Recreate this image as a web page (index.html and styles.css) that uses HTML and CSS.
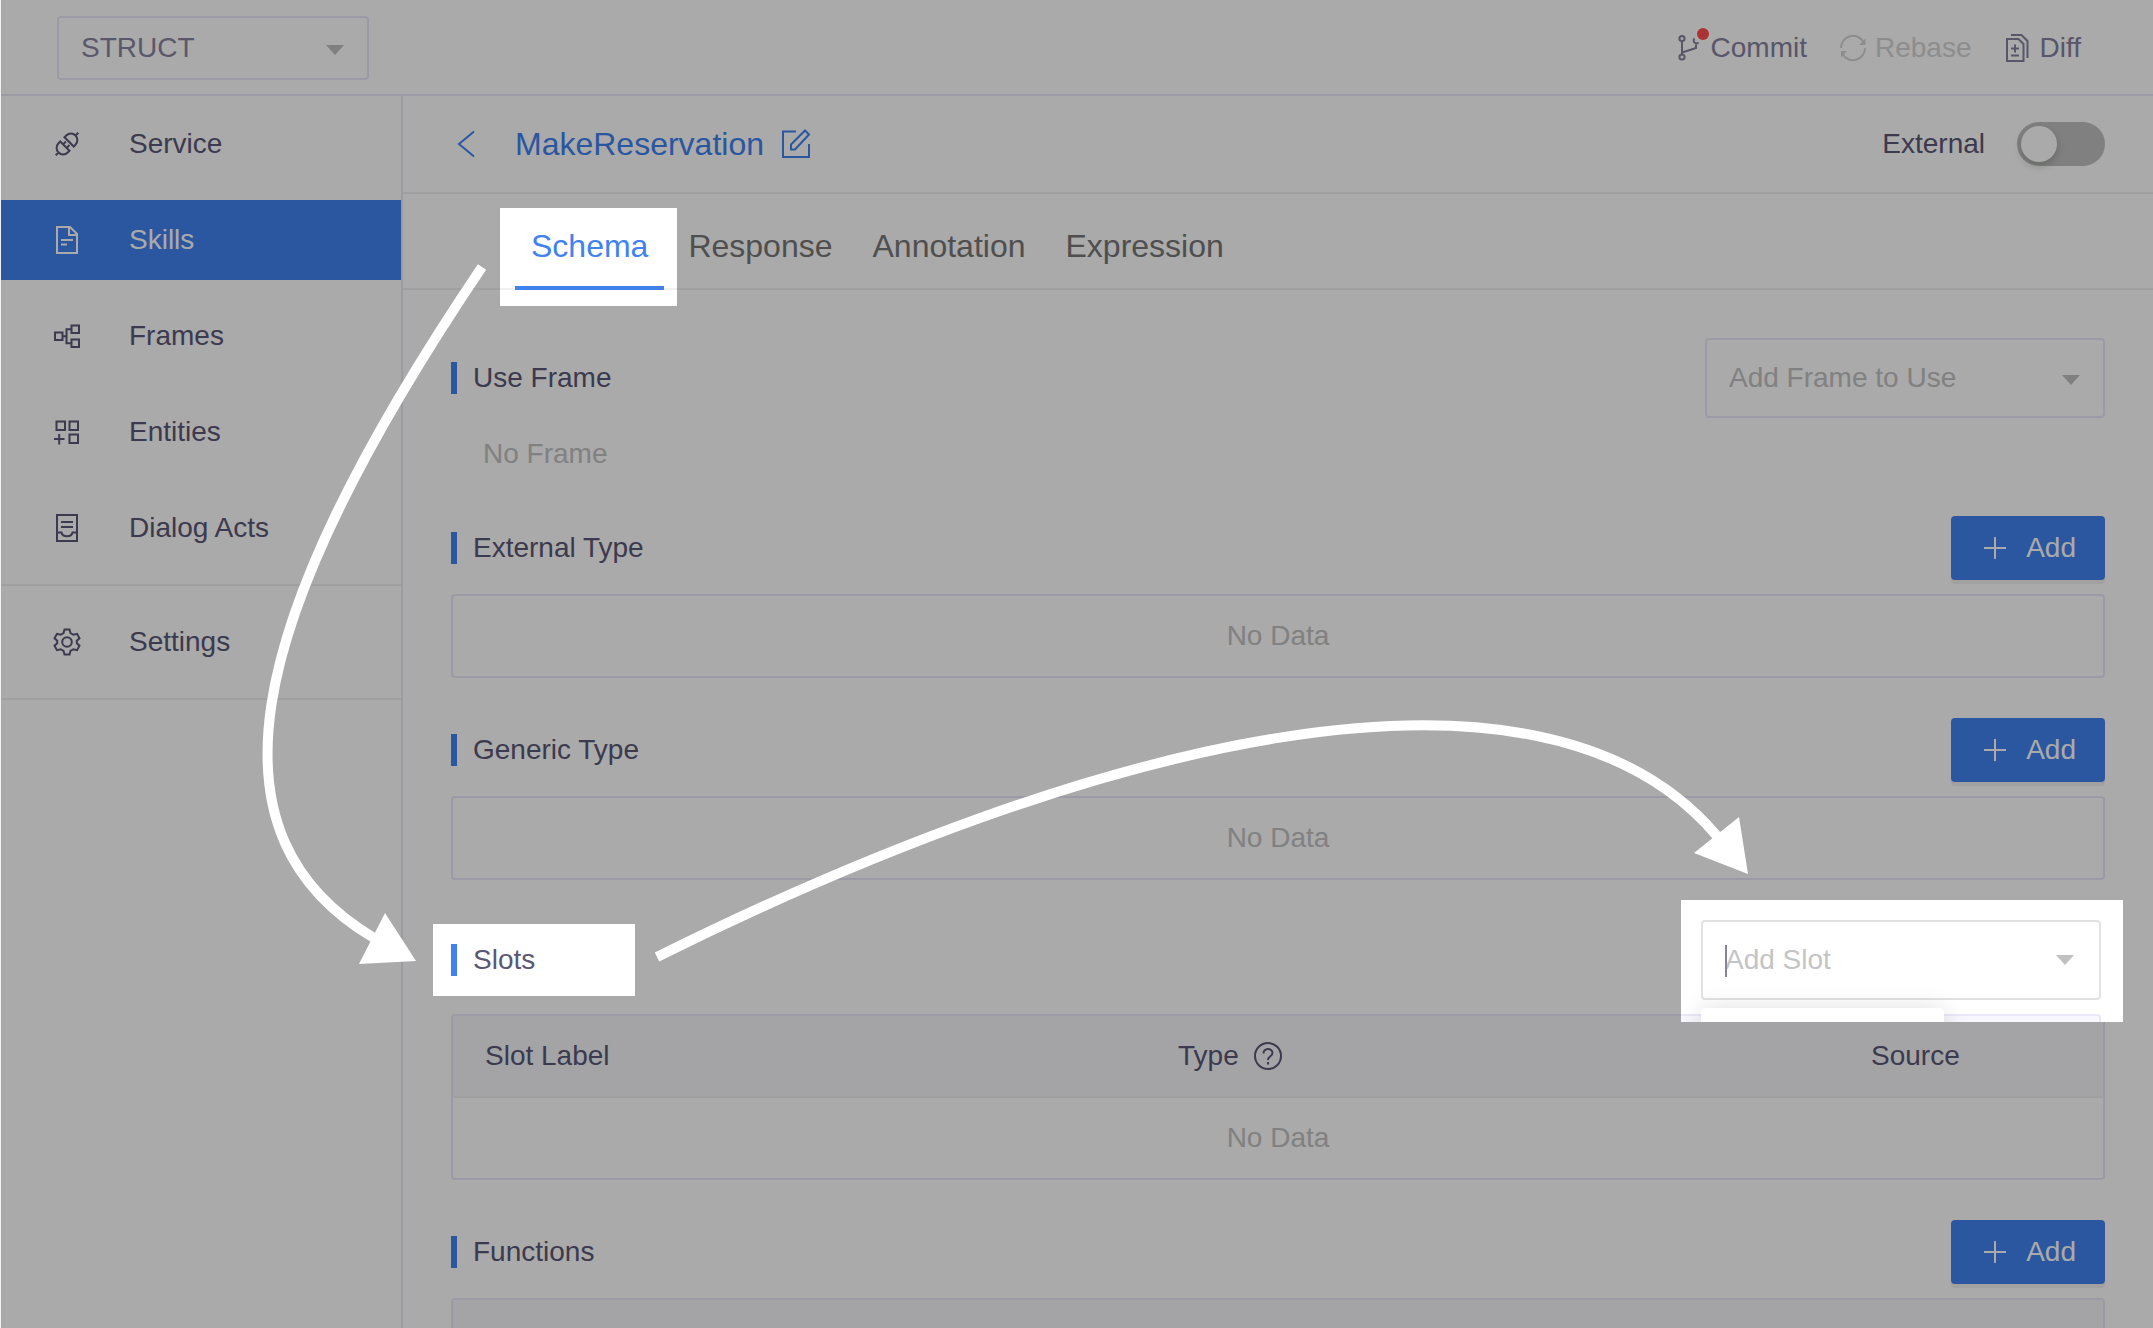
FILE: index.html
```html
<!DOCTYPE html>
<html lang="en">
<head>
<meta charset="utf-8">
<meta name="viewport" content="width=device-width, initial-scale=1">
<title>MakeReservation</title>
<link rel="stylesheet" href="styles.css">
</head>
<body>
<div class="app">
  <header class="topbar">
    <div class="select select-project">
      <select aria-label="Project"><option>STRUCT</option></select>
    </div>
    <div class="actions">
      <button class="action" type="button">
        <svg class="action-icon" viewBox="0 0 26 26"><circle cx="5" cy="3.500" r="2.600"/><circle cx="5" cy="22" r="2.600"/><path d="M5 6v13.500M5 17.500l14-4.500v-3.500"/><path d="M21.500 7.500a2.800 2.800 0 1 1-4-4"/></svg>
        Commit
        <span class="dot"></span>
      </button>
      <button class="action" type="button" disabled>
        <svg class="action-icon" viewBox="0 0 26 26"><path d="M0 13a12 12 0 0 1 22.500-6M24 13a12 12 0 0 1-22.500 6"/><path class="solid" d="M24.500 3.500v6.500h-6.500zM0 22.500v-6.500h6z"/></svg>
        Rebase
      </button>
      <button class="action" type="button">
        <svg class="action-icon" viewBox="0 0 26 26"><path d="M1 4h11.500l5 5v17H1zM5 0h10.500l6 6v17M9 9.500v8M5 13.500h8M5 20.500h8"/></svg>
        Diff
      </button>
    </div>
  </header>

  <div class="body">
    <nav class="sidebar">
      <div class="nav-group">
        <a class="nav-item" href="#service">
          <svg class="nav-icon" viewBox="0 0 28 28"><g transform="rotate(-45 14 14)"><path d="M-2 14h4M11 7.500v13H8.500a6.500 6.500 0 0 1 0-13zM11 11.500h4M11 16.500h4M17 7.500v13h2.500a6.500 6.500 0 0 0 0-13zM26 14h4"/></g></svg>
          Service
        </a>
        <a class="nav-item is-active" href="#skills">
          <svg class="nav-icon" viewBox="0 0 28 28"><path d="M4 1h13l7 7v19H4zM16 1v8h8M8 14h12M8 18.500h6"/></svg>
          Skills
        </a>
        <a class="nav-item" href="#frames">
          <svg class="nav-icon" viewBox="0 0 28 28"><path d="M2 10.500h7.500v7.500H2zM18.500 3.500H26V11h-7.500zM18.500 17.500H26V25h-7.500zM9.500 14.200h4M18.500 7.200h-5v14h5"/></svg>
          Frames
        </a>
        <a class="nav-item" href="#entities">
          <svg class="nav-icon" viewBox="0 0 28 28"><path d="M3.500 3.500h8.500v8.500H3.500zM16.500 3.500H25v8.500h-8.500zM16.500 16.500H25V25h-8.500zM1 21h10.500M6.200 16v10.500"/></svg>
          Entities
        </a>
        <a class="nav-item" href="#dialog-acts">
          <svg class="nav-icon" viewBox="0 0 28 28"><path d="M4 1h20v26H4zM8 8h12M8 13h12M4 18.500h4.500c1 5 10 5 11 0H24"/></svg>
          Dialog Acts
        </a>
      </div>
      <div class="nav-group nav-group-settings">
        <a class="nav-item" href="#settings">
          <svg class="nav-icon" viewBox="0 0 28 28"><circle cx="14" cy="14" r="4.800"/><path d="M11.500 1.500h5l1 3.700 2.800 1.600 3.700-1 2.500 4.400-2.700 2.600v2.400l2.700 2.600-2.500 4.400-3.700-1-2.800 1.600-1 3.700h-5l-1-3.700-2.800-1.600-3.700 1-2.500-4.400 2.700-2.600v-2.400l-2.700-2.600L4 5.800l3.700 1 2.800-1.600z"/></svg>
          Settings
        </a>
      </div>
    </nav>

    <main class="main">
      <div class="crumb">
        <button class="back" type="button" aria-label="Back">
          <svg viewBox="0 0 18 28"><path d="M17 1.500L2 14l15 12.500"/></svg>
        </button>
        <h1>MakeReservation</h1>
        <button class="edit" type="button" aria-label="Rename">
          <svg viewBox="0 0 30 30"><path d="M15 2.500H2V28h26V15M10 20.500v-5L24 1.500l4 4-14 15z"/></svg>
        </button>
        <label class="external" for="external">External</label>
        <input class="switch" id="external" type="checkbox" role="switch">
      </div>

      <nav class="tabs">
        <a class="tab is-active" href="#schema">Schema</a>
        <a class="tab" href="#response">Response</a>
        <a class="tab" href="#annotation">Annotation</a>
        <a class="tab" href="#expression">Expression</a>
      </nav>

      <div class="content">
        <section class="block">
          <div class="block-head">
            <h2>Use Frame</h2>
            <div class="select select-wide is-empty">
              <select aria-label="Add Frame to Use"><option>Add Frame to Use</option></select>
            </div>
          </div>
          <p class="no-frame">No Frame</p>
        </section>

        <section class="block">
          <div class="block-head">
            <h2>External Type</h2>
            <button class="add" type="button"><svg viewBox="0 0 22 22"><path d="M11 0v22M0 11h22"/></svg>Add</button>
          </div>
          <p class="empty">No Data</p>
        </section>

        <section class="block">
          <div class="block-head">
            <h2>Generic Type</h2>
            <button class="add" type="button"><svg viewBox="0 0 22 22"><path d="M11 0v22M0 11h22"/></svg>Add</button>
          </div>
          <p class="empty">No Data</p>
        </section>

        <section class="block">
          <div class="block-head">
            <h2 class="spot-title">Slots</h2>
            <div class="spot-slot">
              <div class="select select-slot">
                <input type="text" aria-label="Add Slot" placeholder="Add Slot">
                <span class="caret"></span>
              </div>
              <div class="spot-table"></div>
              <div class="menu"></div>
            </div>
          </div>
          <table class="grid">
            <thead>
              <tr>
                <th class="col-main">Slot Label</th>
                <th class="col-main"><span class="with-help">Type <svg viewBox="0 0 28 28"><circle cx="14" cy="14" r="13"/><path d="M9.500 11.500c0-6 9-6 9-.5 0 3.500-4.500 3-4.500 7"/><path d="M14 20v2.500"/></svg></span></th>
                <th>Source</th>
              </tr>
            </thead>
            <tbody>
              <tr><td colspan="3">No Data</td></tr>
            </tbody>
          </table>
        </section>

        <section class="block">
          <div class="block-head">
            <h2>Functions</h2>
            <button class="add" type="button"><svg viewBox="0 0 22 22"><path d="M11 0v22M0 11h22"/></svg>Add</button>
          </div>
          <table class="grid">
            <thead>
              <tr><th></th></tr>
            </thead>
          </table>
        </section>
      </div>
    </main>
  </div>

  <div class="shade"></div>
  <svg class="arrows" aria-hidden="true">
    <path class="arrow-line" d="M482 267C233 636 206 838 374 938"/>
    <path class="arrow-head" d="M416 961L385 913L359 964z"/>
    <path class="arrow-line" d="M657 957C1090 742 1540 626 1717 836"/>
    <path class="arrow-head" d="M1748 874L1739 817L1694 853z"/>
  </svg>
</div>
</body>
</html>
```
FILE: styles.css
```css
:root {
  --blue: #4182f0;
  --ink: #5a5775;
  --ink-soft: #86849c;
  --muted: #c2c2c2;
  --line: #eae8f7;
  --line-soft: #f0f0f2;
}

* {
  box-sizing: border-box;
}

body {
  margin: 0;
  background: #fff;
  color: var(--ink);
  font-family: "Liberation Sans", Arial, sans-serif;
  font-size: 28px;
  line-height: 36px;
}

h1,
h2,
p {
  margin: 0;
  font-size: inherit;
  font-weight: 400;
}

a {
  color: inherit;
  text-decoration: none;
}

button,
input,
select {
  margin: 0;
  padding: 0;
  border: 0;
  background: none;
  color: inherit;
  font: inherit;
}

svg {
  fill: none;
  stroke: currentColor;
  stroke-width: 2;
  flex: none;
}

.app {
  position: relative;
  display: flex;
  flex-direction: column;
  height: 100vh;
  overflow: hidden;
  border-left: 1px solid #f0f0f0;
}

/* Top bar */
.topbar {
  display: flex;
  flex: none;
  align-items: center;
  justify-content: space-between;
  padding: 16px 72px 14px 56px;
  border-bottom: 2px solid var(--line);
}

.select {
  position: relative;
}

.select select,
.select input {
  width: 100%;
  height: 100%;
  padding: 0 22px;
  border: 2px solid var(--line);
  border-radius: 4px;
  appearance: none;
  outline: 0;
}

.select::after {
  content: "";
  position: absolute;
  top: 50%;
  right: 25px;
  margin-top: -3px;
  border: solid transparent;
  border-width: 10px 9px 0;
  border-top-color: #c0c0c0;
}

.select-project {
  width: 312px;
  height: 64px;
  color: #8785a0;
}

.select-wide {
  width: 400px;
  height: 80px;
}

.is-empty {
  color: var(--muted);
}

.actions {
  display: flex;
  gap: 34px;
  color: #84829c;
}

.action {
  position: relative;
  display: flex;
  align-items: center;
  gap: 8px;
}

.action:disabled {
  color: #d4d4d4;
}

.action-icon {
  width: 26px;
  height: 26px;
  overflow: visible;
}

.solid {
  fill: currentColor;
  stroke: none;
}

.dot {
  position: absolute;
  top: -2px;
  left: 20px;
  width: 12px;
  height: 12px;
  border-radius: 50%;
  background: #ff4d4f;
}

/* Sidebar */
.body {
  display: flex;
  flex: 1;
  min-height: 0;
}

.sidebar {
  flex: none;
  width: 402px;
  border-right: 2px solid var(--line);
}

.nav-group {
  display: flex;
  flex-direction: column;
  gap: 16px;
  padding: 8px 0 16px;
  border-bottom: 2px solid var(--line-soft);
}

.nav-group-settings {
  padding-top: 16px;
}

.nav-item {
  display: flex;
  align-items: center;
  gap: 48px;
  height: 80px;
  padding-left: 52px;
}

.nav-item.is-active {
  background: var(--blue);
  color: #fff;
}

.nav-icon {
  width: 28px;
  height: 28px;
  overflow: visible;
}

/* Page heading */
.main {
  flex: 1;
  min-width: 0;
}

.crumb {
  display: flex;
  align-items: center;
  height: 98px;
  padding: 0 48px 0 54px;
  border-bottom: 2px solid var(--line-soft);
}

.crumb h1 {
  margin: 0 17px 0 40px;
  color: var(--blue);
  font-size: 32px;
}

.back,
.edit {
  display: flex;
  color: var(--blue);
}

.back svg {
  width: 18px;
  height: 28px;
}

.edit svg {
  width: 30px;
  height: 30px;
}

.external {
  margin-left: auto;
  margin-right: 32px;
}

.switch {
  width: 88px;
  height: 44px;
  padding: 4px;
  border-radius: 22px;
  background: #c0c0c0;
  appearance: none;
}

.switch::before {
  content: "";
  display: block;
  width: 36px;
  height: 36px;
  border-radius: 50%;
  background: #fff;
  box-shadow: 0 4px 8px rgba(0, 35, 11, 0.2);
}

.switch:checked {
  background: var(--blue);
}

.switch:checked::before {
  margin-left: auto;
}

/* Tabs */
.tabs {
  display: flex;
  height: 96px;
  padding-left: 108px;
  border-bottom: 2px solid var(--line-soft);
  color: #777;
  font-size: 32px;
}

.tab {
  display: flex;
  align-items: center;
  padding: 10px 20px 0;
}

.tab.is-active {
  position: relative;
  z-index: 3;
  color: var(--blue);
}

.tab.is-active::before {
  content: "";
  position: absolute;
  inset: 14px -9px -18px -11px;
  z-index: -1;
  background: linear-gradient(var(--line-soft), var(--line-soft)) 0 80px / 100% 2px no-repeat #fff;
}

.tab.is-active::after {
  content: "";
  position: absolute;
  right: 4px;
  bottom: -2px;
  left: 4px;
  height: 4px;
  background: var(--blue);
}

/* Sections */
.content {
  display: flex;
  flex-direction: column;
  gap: 40px;
  padding: 48px 48px 0;
}

.block {
  display: flex;
  flex-direction: column;
  gap: 14px;
}

.block-head {
  display: flex;
  align-items: center;
  justify-content: space-between;
}

.block h2 {
  display: flex;
  align-items: center;
  gap: 16px;
}

.block h2::before {
  content: "";
  width: 6px;
  height: 32px;
  background: var(--blue);
}

.no-frame {
  padding: 4px 32px;
  color: var(--muted);
}

.add {
  display: flex;
  align-items: center;
  justify-content: flex-end;
  gap: 20px;
  width: 154px;
  height: 64px;
  padding-right: 29px;
  border-radius: 4px;
  background: var(--blue);
  box-shadow: 0 4px 0 rgba(0, 0, 0, 0.05);
  color: #fff;
}

.add svg {
  width: 22px;
  height: 22px;
}

.empty {
  padding: 22px;
  border: 2px solid var(--line);
  border-radius: 4px;
  color: var(--muted);
  text-align: center;
}

.grid {
  width: 100%;
  border: 2px solid var(--line);
  border-radius: 4px;
  border-spacing: 0;
  table-layout: fixed;
}

.grid th {
  height: 82px;
  padding: 0 32px;
  border-bottom: 2px solid var(--line-soft);
  background: #f7f7fa;
  font-weight: 400;
  text-align: left;
}

.grid td {
  height: 80px;
  padding: 0;
  color: var(--muted);
  text-align: center;
}

.col-main {
  width: 42%;
}

.with-help {
  display: flex;
  align-items: center;
  gap: 15px;
}

.with-help svg {
  width: 28px;
  height: 28px;
}

/* Walkthrough: shade, lit areas and arrows */
.shade {
  position: absolute;
  inset: 0 0 0 -1px;
  z-index: 2;
  background: rgba(0, 0, 0, 0.333);
  pointer-events: none;
}

.arrows {
  position: absolute;
  top: 0;
  left: -1px;
  z-index: 4;
  width: 100%;
  height: 100%;
  color: #fff;
  pointer-events: none;
}

.arrow-line {
  stroke-width: 10;
}

.arrow-head {
  fill: currentColor;
  stroke: none;
}

.block .spot-title {
  position: relative;
  z-index: 3;
  width: 202px;
  height: 72px;
  margin-left: -18px;
  padding-left: 18px;
  background: #fff;
}

.spot-slot {
  position: relative;
  z-index: 3;
  width: 442px;
  height: 122px;
  margin: -20px -18px -22px 0;
  padding: 20px 22px 22px 20px;
  overflow: hidden;
  background: #fff;
}

.select-slot {
  height: 80px;
}

.select-slot input {
  border-color: #e2e2e2;
}

.select-slot::after {
  right: 27px;
  margin-top: -5px;
}

.select-slot input::placeholder {
  color: #c4c4c4;
  opacity: 1;
}

.select-slot .caret {
  position: absolute;
  top: 25px;
  left: 24px;
  width: 2px;
  height: 32px;
  background: var(--ink-soft);
}

.spot-table {
  position: absolute;
  right: 22px;
  bottom: 0;
  left: 0;
  height: 8px;
  border: solid var(--line);
  border-width: 2px 2px 0 0;
  border-radius: 0 4px 0 0;
  background: #f7f7fd;
}

.menu {
  position: absolute;
  bottom: -26px;
  left: 20px;
  width: 243px;
  height: 40px;
  border-radius: 4px;
  background: #fff;
  box-shadow: 0 2px 24px rgba(0, 0, 0, 0.15);
}
```
